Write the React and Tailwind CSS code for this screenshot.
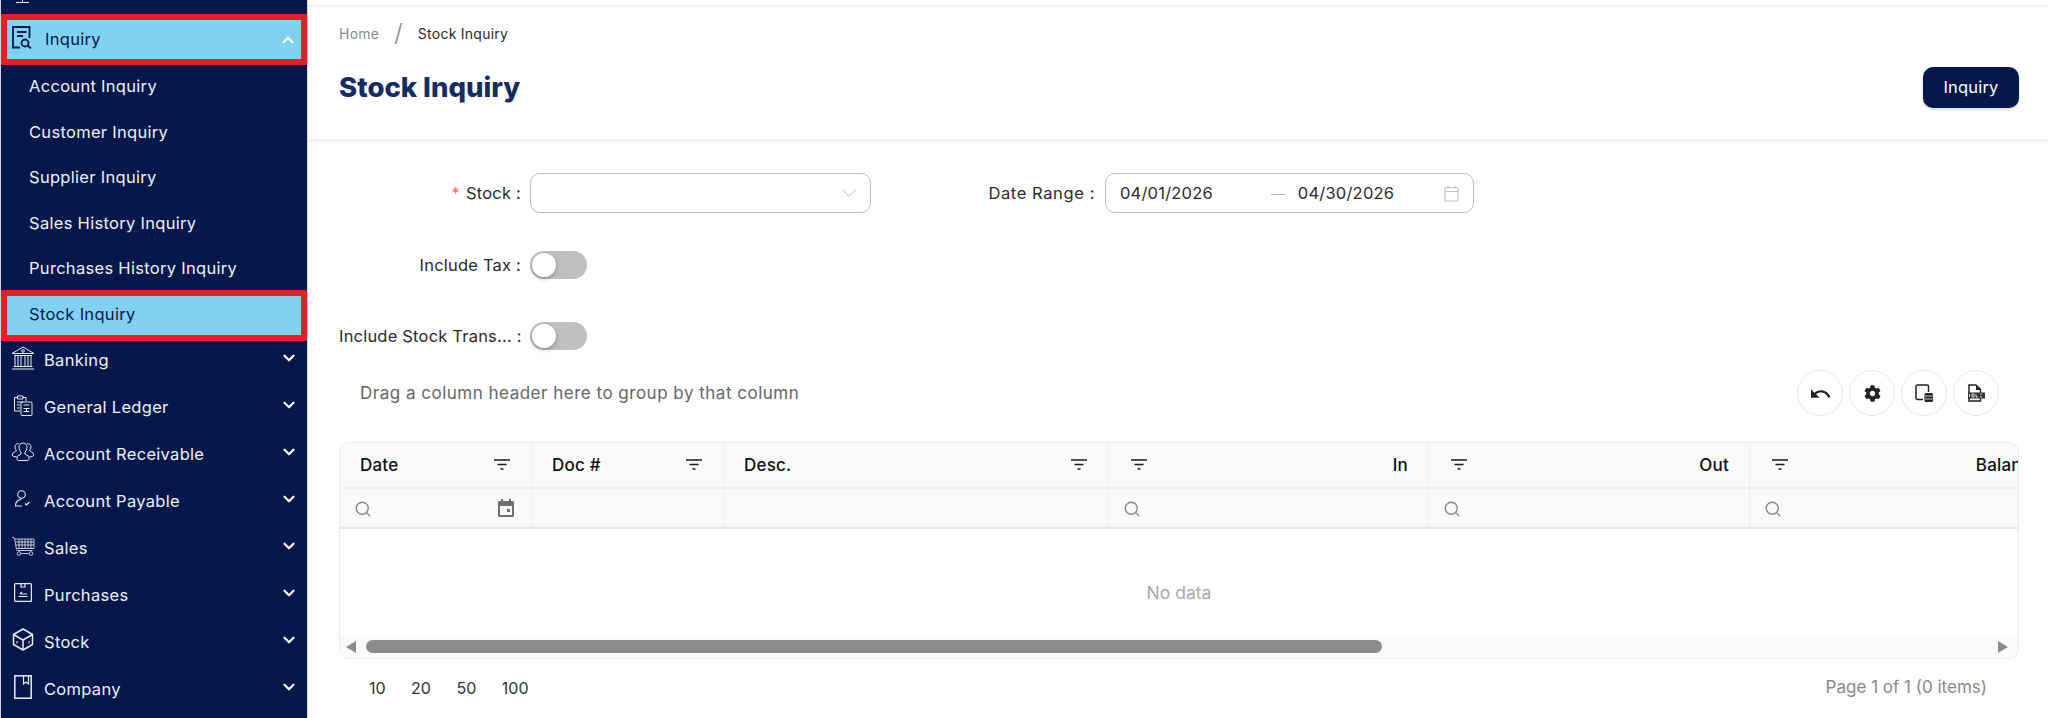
import { ChevronDown, ChevronUp, Search } from "lucide-react"
import { FaCog } from "react-icons/fa"

const font = "[font-family:Inter,'Noto_Sans',sans-serif]"

function InquiryIcon() {
  return (
    <svg width="20" height="23" viewBox="0 0 20 23" fill="none" stroke="#04174a" strokeWidth="1.800">
      <path d="M8 21.500H1V1h16.500v11" />
      <path d="M5 6h9.500M5 10h6" />
      <circle cx="13" cy="17" r="3.500" />
      <path d="M15.500 19.500l3.500 3" />
    </svg>
  )
}

function BankIcon() {
  return (
    <svg width="24" height="24" viewBox="0 0 24 24" fill="none" stroke="#e8ecf5" strokeWidth="1">
      <path d="M12 1L1 7.500h22z" />
      <circle cx="12" cy="5" r="1.300" />
      <path d="M3 9.500h18M4 20V9.500M7 20V9.500M10 20V9.500M14 20V9.500M17 20V9.500M20 20V9.500M2.500 20.500h19M1 23h22" />
    </svg>
  )
}

function LedgerIcon() {
  return (
    <svg width="20" height="22" viewBox="0 0 20 22" fill="none" stroke="#e8ecf5" strokeWidth="1">
      <path d="M7 17H1.500V3.500h3M10 3.500h3V7" />
      <path d="M4.500 2h5.500v3H4.500z" />
      <path d="M4 8h6M4 11h3M4 14h3" />
      <rect x="8" y="8" width="11" height="13.500" rx="1" />
      <path d="M10.500 11h6M10.500 14.500h6M10.500 17.500h6M13.500 14.500v3" />
    </svg>
  )
}

function ReceivableIcon() {
  return (
    <svg width="24" height="22" viewBox="0 0 24 22" fill="none" stroke="#e8ecf5" strokeWidth="1">
      <path d="M12 2c-3 0-4 2-4 4.500 0 2 1 3.500 2 4.500v2l-4 2.500v2.500c0 1 1 1.500 2 1.500h8c1 0 2-.5 2-1.500V15.500L14 13v-2c1-1 2-2.500 2-4.500C16 4 15 2 12 2z" />
      <path d="M8 3c-2-1-4 .5-4 3 0 1.500.5 2.500 1.500 3.500L2 12c-1 1-1 3 .5 3.500L5.500 16" />
      <path d="M16 3c2-1 4 .5 4 3 0 1.500-.5 2.500-1.500 3.500L22 12c1 1 1 3-.5 3.500L18.500 16" />
    </svg>
  )
}

function PayableIcon() {
  return (
    <svg width="17" height="17" viewBox="0 0 17 17" fill="none" stroke="#e8ecf5" strokeWidth="1.100">
      <circle cx="7.500" cy="4.500" r="3.800" />
      <path d="M1.500 15.500c0-3 2-5.500 6-6.500M1 16h7" />
      <path d="M11 13.500l1.500 1.500 3-3" />
    </svg>
  )
}

function CartIcon() {
  return (
    <svg width="24" height="20" viewBox="0 0 24 20" fill="none" stroke="#e8ecf5" strokeWidth="0.800">
      <path d="M1 1l2.500 1 2 11.500c0 .5.500 1 1 1h15" />
      <path d="M4 3h19v9.500H6M8 3v9.500M11 3v9.500M14 3v9.500M17 3v9.500M20 3v9.500M4.500 6h18.500M5 9h18" />
      <circle cx="8" cy="17.500" r="1.800" />
      <circle cx="20" cy="17.500" r="1.800" />
      <path d="M9.800 17.500h8.400" />
    </svg>
  )
}

function PurchaseIcon() {
  return (
    <svg width="18" height="19" viewBox="0 0 18 19" fill="none" stroke="#e8ecf5" strokeWidth="1.200">
      <rect x="0.600" y="0.600" width="16.800" height="17.800" rx="1" />
      <path d="M7 1v3h4V1" />
      <path d="M4.500 13.500h9M6 11h7M6 11l2-2" />
    </svg>
  )
}

function BoxIcon() {
  return (
    <svg width="22" height="23" viewBox="0 0 22 23" fill="none" stroke="#e8ecf5" strokeWidth="1.500" strokeLinejoin="round">
      <path d="M11 1l9.500 5.500v10L11 22l-9.500-5.500v-10z" />
      <path d="M1.500 6.500L11 12l9.500-5.500M11 12v10" />
      <path d="M5 13v2.500M17 13v2.500" strokeWidth="1" />
    </svg>
  )
}

function BookIcon() {
  return (
    <svg width="18" height="24" viewBox="0 0 18 24" fill="none" stroke="#e8ecf5" strokeWidth="1.500">
      <rect x="0.800" y="0.800" width="16.400" height="22.400" />
      <path d="M9.500 1v8l2.500-2 2.500 2V1" strokeWidth="1.200" />
    </svg>
  )
}

function FilterIcon() {
  return (
    <svg width="16" height="12" viewBox="0 0 16 12" fill="none" stroke="#1b1b1b" strokeWidth="1.500">
      <path d="M0 1h16M3.500 5.500h9M6.500 10h3" />
    </svg>
  )
}

function SearchMark() {
  return <Search size={18} strokeWidth={1.800} className="text-[#8a8a8a] -ml-[1px] mt-[2px]" />
}

function UndoIcon() {
  return (
    <svg width="19" height="11" viewBox="2 6 20 11" fill="#222">
      <path d="M12.500 8c-2.650 0-5.050.990-6.900 2.600L2 7v9h9l-3.620-3.620c1.390-1.160 3.160-1.880 5.120-1.880 3.540 0 6.550 2.310 7.600 5.500l2.370-.78C21.080 11.030 17.150 8 12.500 8z" />
    </svg>
  )
}

function ColumnsIcon() {
  return (
    <svg width="18" height="18" viewBox="0 0 18 18" fill="none">
      <path d="M8 15.500H2.500a1.500 1.500 0 0 1-1.500-1.500V2.500A1.500 1.500 0 0 1 2.500 1H12a1.500 1.500 0 0 1 1.500 1.500V8" stroke="#222" strokeWidth="1.500" />
      <rect x="9.500" y="9" width="8.500" height="9" rx="1.500" fill="#222" />
      <path d="M10 12h7.500M10 15h7.500" stroke="#fff" strokeWidth="0.800" />
    </svg>
  )
}

function ExportIcon() {
  return (
    <svg width="18" height="18" viewBox="0 0 18 18" fill="none">
      <path d="M2 1h7l4.500 4.500V17H2z" fill="#fff" stroke="#222" strokeWidth="1.500" />
      <path d="M9 1v5h5z" fill="#222" />
      <rect x="1" y="8.500" width="17" height="6" fill="#333" />
      <path d="M2.500 10v3M5 10h2v3H5zM9 10v3h2M13 10h2M13 13h2" stroke="#fff" strokeWidth="0.800" />
    </svg>
  )
}

const subItems = ["Account Inquiry", "Customer Inquiry", "Supplier Inquiry", "Sales History Inquiry", "Purchases History Inquiry"]

const mainItems = [
  ["Banking", <BankIcon />],
  ["General Ledger", <LedgerIcon />],
  ["Account Receivable", <ReceivableIcon />],
  ["Account Payable", <PayableIcon />],
  ["Sales", <CartIcon />],
  ["Purchases", <PurchaseIcon />],
  ["Stock", <BoxIcon />],
  ["Company", <BookIcon />],
]

function Sidebar() {
  return (
    <aside className="w-[308px] h-[718px] shrink-0 overflow-hidden bg-[#04174a] border-x border-[#d5d8e0] text-[#eef1f7] text-[16.500px] tracking-[0.3px]">
      <div className="h-[14px] pl-[15px] overflow-hidden">
        <div className="w-[13px] h-[3px] border-b border-[#e8ecf5] flex justify-center">
          <div className="w-px h-[3px] bg-[#e8ecf5]" />
        </div>
      </div>
      <div className="relative z-10 h-[51px] flex items-center bg-[#81d2f2] border-[6px] border-[#e61f24] text-[#04174a] pl-[5px] pr-[4px]">
        <div className="-mt-[4px]"><InquiryIcon /></div>
        <span className="ml-[13px] flex-1">Inquiry</span>
        <ChevronUp size={18} strokeWidth={3} className="text-white" />
      </div>
      <div className="-mt-[1px]">
        {subItems.map((name) => (
          <div key={name} className="h-[45.500px] flex items-center pl-[28px]">{name}</div>
        ))}
      </div>
      <div className="relative z-10 h-[51px] flex items-center bg-[#81d2f2] border-[6px] border-[#e61f24] text-[#04174a] pl-[22px] pb-[2px] -mt-[1.500px]">
        Stock Inquiry
      </div>
      <div className="-mt-[4.500px]">
        {mainItems.map(([name, icon]) => (
          <div key={name} className="h-[47px] flex items-center pr-[9px]">
            <div className="w-[43px] -mt-[5px] flex justify-center shrink-0">{icon}</div>
            <span className="flex-1">{name}</span>
            <ChevronDown size={18} strokeWidth={3} className="text-white -mt-[4px]" />
          </div>
        ))}
      </div>
    </aside>
  )
}

function Toggle() {
  return (
    <div className="w-[57px] h-[28px] rounded-full bg-[#bfbfbf] p-[2px]">
      <div className="w-[24px] h-[24px] rounded-full bg-white shadow-[0_2px_4px_rgba(0,0,0,0.25)]" />
    </div>
  )
}

function FormRow({ label, required, children, className }) {
  return (
    <div className={`flex items-center ${className}`}>
      <div className="w-[182px] mr-[9px] shrink-0 text-right text-[16.500px] tracking-[0.2px] text-[#2b2b2b] whitespace-nowrap">
        {required && <span className="text-[#ff6b6b] mr-[6px]">*</span>}
        {label} :
      </div>
      {children}
    </div>
  )
}

function RoundButton({ children }) {
  return (
    <div className="w-[46px] h-[46px] rounded-full border border-[#e6e6e6] flex items-center justify-center">{children}</div>
  )
}

const columns = [
  { name: "Date", width: "w-[192px]", pad: "pl-[20px] pr-[21px]", left: true, filter: "date" },
  { name: "Doc #", width: "w-[192px]", pad: "pl-[20px] pr-[21px]", left: true },
  { name: "Desc.", width: "w-[385px]", pad: "pl-[20px] pr-[21px]", left: true },
  { name: "In", width: "w-[320px]", pad: "pl-[22px] pr-[20px]" },
  { name: "Out", width: "w-[321px]", pad: "pl-[22px] pr-[20px]" },
  { name: "Balance", width: "w-[320px]", pad: "pl-[22px] pr-[27px]" },
]

function Grid() {
  return (
    <div className="mt-[26px] w-[1680px] h-[217px] rounded-[10px] border border-[#ececec] overflow-hidden relative">
      <div className="flex w-[1730px] h-[46px] bg-[#fafafa] border-b-2 border-[#f0f0f0]">
        {columns.map((c) => (
          <div key={c.name} className={`${c.width} ${c.pad} shrink-0 flex items-center justify-between border-r border-[#efefef] text-[17px] tracking-[0.2px] font-medium text-[#111]`}>
            {c.left ? (
              <>
                <span className="pt-[1px]">{c.name}</span>
                <FilterIcon />
              </>
            ) : (
              <>
                <FilterIcon />
                <span className="pt-[1px]">{c.name}</span>
              </>
            )}
          </div>
        ))}
      </div>
      <div className="flex w-[1730px] h-[40px] bg-[#fafafa] border-b-2 border-[#e8e8e8]">
        {columns.map((c) => (
          <div key={c.name} className={`${c.width} shrink-0 flex items-center justify-between pl-[15px] pr-[17px] border-r border-[#efefef]`}>
            {c.name !== "Doc #" && c.name !== "Desc." && <SearchMark />}
            {c.filter === "date" && (
              <svg width="16" height="18" viewBox="0 0 16 18" fill="#6f6f6f">
                <path d="M3 0h2v2h6V0h2v2h1.500A1.500 1.500 0 0 1 16 3.500v13a1.500 1.500 0 0 1-1.500 1.500h-13A1.500 1.500 0 0 1 0 16.500v-13A1.500 1.500 0 0 1 1.500 2H3zM2 7v9h12V7z" />
                <rect x="9" y="10" width="3" height="3" />
              </svg>
            )}
          </div>
        ))}
      </div>
      <div className="h-[107px] pt-[22px] flex items-center justify-center text-[17.500px] text-[#a8a8a8]">No data</div>
      <div className="h-[21px] bg-[#fafafa] flex items-center pl-[6px] pr-[10px]">
        <div className="w-0 h-0 border-y-[6px] border-y-transparent border-r-[10px] border-r-[#8c8c8c]" />
        <div className="ml-[10px] w-[1016px] h-[13px] rounded-full bg-[#8c8c8c]" />
        <div className="ml-auto w-0 h-0 border-y-[6px] border-y-transparent border-l-[10px] border-l-[#8c8c8c]" />
      </div>
    </div>
  )
}

export default function App() {
  return (
    <div className={`flex w-[2048px] h-[718px] overflow-hidden bg-white ${font}`}>
      <Sidebar />
      <main className="flex-1 min-w-0">
        <div className="h-[7px] border-b-2 border-[#f2f2f2]" />
        <div className="h-[135px] border-b-[3px] border-[#f2f2f2] pl-[31px] pr-[29px]">
          <div className="pt-[14px] flex items-center text-[14px] tracking-[0.25px] text-[#2b2b2b]">
            <span className="text-[#8a8a8a]">Home</span>
            <span className="mx-[15px] text-[#8a8a8a] text-[24px] font-light leading-none">/</span>
            <span>Stock Inquiry</span>
          </div>
          <div className="mt-[24px] flex items-start justify-between">
            <h1 className="text-[27.500px] leading-[36px] font-extrabold text-[#132c66]">Stock Inquiry</h1>
            <button className={`-mt-[2px] w-[96px] h-[41px] rounded-[10px] bg-[#04174a] text-white text-[16.500px] tracking-[0.2px] shadow-[0_2px_3px_rgba(0,0,0,0.15)] ${font}`}>Inquiry</button>
          </div>
        </div>
        <div className="pl-[31px]">
          <div className="pt-[31px] flex items-center">
            <FormRow label="Stock" required>
              <div className="w-[341px] h-[40px] rounded-[10px] border border-[#bdbdbd] flex items-center justify-end pr-[8px]">
                <ChevronDown size={26} strokeWidth={0.700} className="text-[#a8a8a8]" />
              </div>
            </FormRow>
            <div className="w-[234px] pr-[10px] text-right text-[16.500px] tracking-[0.6px] text-[#2b2b2b] whitespace-nowrap">Date Range :</div>
            <div className="w-[369px] h-[40px] rounded-[10px] border border-[#bdbdbd] flex items-center pl-[14px] pr-[14px] text-[16.500px] tracking-[0.2px] text-[#2b2b2b]">
              <span>04/01/2026</span>
              <span className="ml-[58px] w-[14px] h-[4px] border-b border-[#b5b5b5]" />
              <span className="ml-[13px]">04/30/2026</span>
              <svg className="ml-auto" width="15" height="17" viewBox="0 0 15 17" fill="none" stroke="#c4c4c4" strokeWidth="1.200">
                <rect x="1" y="2.500" width="13" height="13.500" rx="1" />
                <path d="M1 6.500h13M4 0.500v3M11 0.500v3" />
              </svg>
            </div>
          </div>
          <FormRow label="Include Tax" className="mt-[38px]"><Toggle /></FormRow>
          <FormRow label="Include Stock Trans..." className="mt-[43px]"><Toggle /></FormRow>
          <div className="flex items-center mt-[20px] pl-[21px] pr-[20px] text-[17px] tracking-[0.5px] text-[#666] w-[1680px]">
            <span className="pt-[2px]">Drag a column header here to group by that column</span>
            <div className="ml-auto flex gap-[6px]">
              <RoundButton><UndoIcon /></RoundButton>
              <RoundButton><FaCog size={17} className="text-[#222]" /></RoundButton>
              <RoundButton><ColumnsIcon /></RoundButton>
              <RoundButton><ExportIcon /></RoundButton>
            </div>
          </div>
          <Grid />
          <div className="flex items-center mt-[16px] text-[16px] text-[#333] w-[1680px] pr-[32px]">
            <div className="flex gap-[25.500px] pl-[30px]">
              <span>10</span><span>20</span><span>50</span><span>100</span>
            </div>
            <span className="ml-auto text-[17px] text-[#8a8a8a]">Page 1 of 1 (0 items)</span>
          </div>
        </div>
      </main>
    </div>
  )
}
